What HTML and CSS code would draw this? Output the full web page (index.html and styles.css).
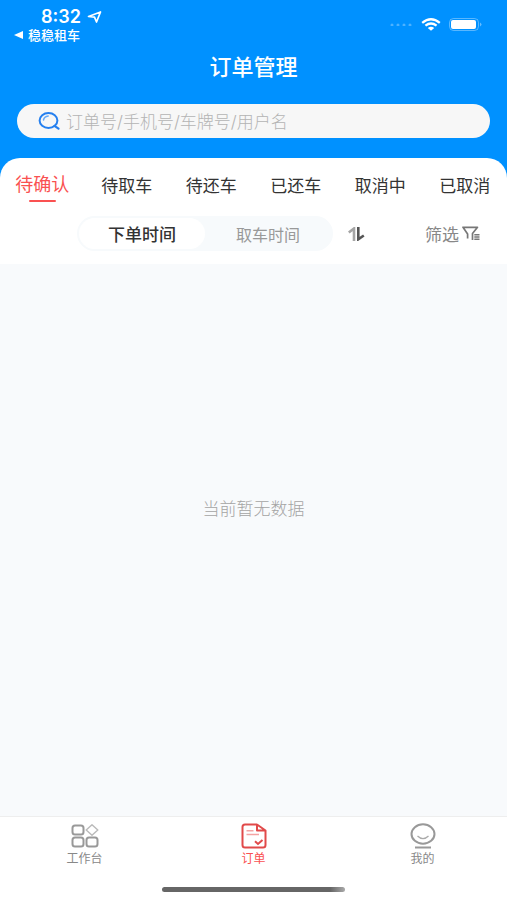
FILE: index.html
```html
<!DOCTYPE html>
<html lang="zh-CN">
<head>
    <meta charset="UTF-8">
    <meta name="viewport" content="width=device-width, initial-scale=1.0">
    <title>订单管理</title>
    <link rel="stylesheet" href="styles.css">
</head>
<body>
    <header class="header">
        <div class="status-bar">
            <div class="status-left">
                <div class="clock">
                    <span>8:32</span>
                    <svg width="15" height="12" viewBox="0 0 15 12"><path d="M1.5 5.5 L13.5 1 L9.5 11 L7.5 6.2 Z" fill="none" stroke="#fff" stroke-width="1.7" stroke-linejoin="round"/></svg>
                </div>
                <a class="back-link" href="#">
                    <svg width="9" height="8" viewBox="0 0 9 8"><path d="M0 4 L9 0 V8 Z" fill="#fff"/></svg>
                    <span>稳稳租车</span>
                </a>
            </div>
            <div class="status-right">
                <svg width="23" height="4" viewBox="0 0 23 4" fill="#fff" fill-opacity="0.3"><circle cx="2" cy="3" r="1.5"/><circle cx="8" cy="3" r="1.5"/><circle cx="14" cy="3" r="1.5"/><circle cx="20" cy="3" r="1.5"/></svg>
                <svg width="20" height="13" viewBox="0 0 20 13"><path d="M1.2 4.8 Q10 -2.2 18.8 4.8 M4.4 7.7 Q10 3.4 15.6 7.7" fill="none" stroke="#fff" stroke-width="2.3"/><path d="M6.8 9.9 Q10 7.5 13.2 9.9 L10 12.8 Z" fill="#fff"/></svg>
                <svg width="33" height="13" viewBox="0 0 33 13"><rect x="0.5" y="0.5" width="29" height="12" rx="4" fill="none" stroke="#fff" stroke-opacity="0.35"/><rect x="2" y="2" width="25" height="9" rx="2" fill="#fff"/><path d="M31 4.5 Q34 6.5 31 8.5 Z" fill="#fff" fill-opacity="0.4"/></svg>
            </div>
        </div>

        <h1 class="title">订单管理</h1>

        <label class="search">
            <svg width="22" height="18" viewBox="0 0 22 18" fill="none" stroke="#2680ef" stroke-linecap="round"><ellipse cx="10.5" cy="8.5" rx="8.9" ry="7.4" stroke-width="2"/><path d="M16.5 13.8 L20.5 16.7" stroke-width="2.2"/><path d="M5.5 8 Q6.2 4.5 10.2 4" stroke="#69aaf5" stroke-width="1.5"/></svg>
            <input type="text" placeholder="订单号/手机号/车牌号/用户名" aria-label="搜索订单">
        </label>
    </header>

    <section class="panel">
        <nav class="tabs">
            <button class="tab active">待确认</button>
            <button class="tab">待取车</button>
            <button class="tab">待还车</button>
            <button class="tab">已还车</button>
            <button class="tab">取消中</button>
            <button class="tab">已取消</button>
        </nav>

        <div class="toolbar">
            <div class="segment">
                <button class="segment-item selected">下单时间</button>
                <button class="segment-item">取车时间</button>
            </div>
            <button class="sort" aria-label="排序">
                <svg width="17" height="14" viewBox="0 0 17 14" fill="none" stroke-width="2.6"><path d="M6 14 V1.5 L0.8 5.5" stroke="#a5a5a5"/><path d="M10.3 0 V12.3 L15.8 8.5" stroke="#555"/></svg>
            </button>
            <button class="filter">
                <span>筛选</span>
                <svg width="18" height="15" viewBox="0 0 18 15" fill="none"><path d="M5.6 12.5 V8 L1 1.3 H15.5 L10.5 7.5 V14" stroke="#777" stroke-width="1.7" stroke-linejoin="round"/><path d="M12.3 8.7 H17.5 M12.3 11 H17.5 M12.3 13.3 H17.5" stroke="#777" stroke-width="1.4"/></svg>
            </button>
        </div>
    </section>

    <main class="content">
        <p class="empty">当前暂无数据</p>
    </main>

    <footer class="footer">
        <nav class="bottom-nav">
            <a class="nav-item" href="#">
                <svg width="28" height="26" viewBox="0 0 28 26" fill="none" stroke="#999" stroke-width="2"><rect x="1.5" y="2.5" width="11" height="9" rx="2.5"/><path d="M21 1.8 L26.8 7 L21 12.2 L15.2 7 Z" stroke="#bbb" stroke-width="1.5" stroke-linejoin="round"/><rect x="1.5" y="14.5" width="11" height="9" rx="2.5"/><rect x="15.5" y="14.5" width="11" height="9" rx="2.5"/></svg>
                <span>工作台</span>
            </a>
            <a class="nav-item current" href="#">
                <svg width="28" height="26" viewBox="0 0 28 26" fill="none" stroke="#e14a4a"><path d="M17 1.5 H5 Q2.5 1.5 2.5 4 V22 Q2.5 24.5 5 24.5 H23 Q25.5 24.5 25.5 22 V7.5 L17 1.5 V7.5 H25.5" stroke-width="2" stroke-linejoin="round"/><path d="M6.5 7.7 H13.5 M6.5 11.5 H19" stroke="#f4a3a3" stroke-width="1.5"/><path d="M15 18.3 L18 21 L22.5 17" stroke-width="2"/></svg>
                <span>订单</span>
            </a>
            <a class="nav-item" href="#">
                <svg width="28" height="26" viewBox="0 0 28 26" fill="none" stroke="#999"><ellipse cx="14" cy="11" rx="11.5" ry="9.7" stroke-width="2"/><path d="M8.5 13 Q14 18.3 19.5 13" stroke="#aaa" stroke-width="1.3"/><path d="M6 24.5 H22" stroke-width="2"/></svg>
                <span>我的</span>
            </a>
        </nav>
        <div class="home-indicator"></div>
    </footer>
</body>
</html>
```
FILE: styles.css
```css
* {
    box-sizing: border-box;
    margin: 0;
    padding: 0;
    font-family: 'Inter', 'Noto Sans CJK SC', sans-serif;
}
body {
    background: #0091ff;
    color: #333;
    min-height: 100vh;
    display: flex;
    flex-direction: column;
}
button {
    background: none;
    border: none;
    cursor: pointer;
}
a {
    text-decoration: none;
}
svg {
    display: block;
    flex-shrink: 0;
}

/* header */
.header {
    color: #fff;
    padding: 9px 17px 20px;
}
.status-bar {
    display: flex;
    justify-content: space-between;
}
.clock {
    display: flex;
    align-items: center;
    gap: 6px;
    margin-left: 24px;
    font-size: 18px;
    font-weight: 600;
    line-height: 16px;
}
.back-link {
    display: flex;
    align-items: center;
    gap: 5px;
    margin-top: 1px;
    margin-left: -3px;
    color: #fff;
    font-size: 13px;
    font-weight: 500;
    line-height: 18px;
}
.status-right {
    display: flex;
    align-items: center;
    gap: 8px;
    height: 30px;
    margin-right: 8px;
}
.title {
    margin: 10px 0 24px;
    font-size: 22px;
    font-weight: 500;
    line-height: 26px;
    text-align: center;
}
.search {
    display: flex;
    align-items: center;
    gap: 6px;
    height: 34px;
    padding: 0 21px;
    border-radius: 17px;
    background: #f7f7f7;
}
.search input {
    flex: 1;
    min-width: 0;
    padding-top: 2px;
    border: none;
    outline: none;
    background: transparent;
    color: #333;
    font-size: 17px;
    line-height: 24px;
}
.search input::placeholder {
    color: #b4b4b4;
    font-weight: 300;
}

/* order tabs and sorting */
.panel {
    background: #fff;
    border-radius: 20px 20px 0 0;
}
.tabs {
    display: grid;
    grid-template-columns: repeat(6, 1fr);
    padding-top: 12px;
}
.tab {
    display: flex;
    flex-direction: column;
    align-items: center;
    height: 32px;
    color: #333;
    font-size: 17px;
    line-height: 32px;
    white-space: nowrap;
}
.tab.active {
    color: #fa5151;
    font-size: 18px;
    line-height: 30px;
}
.tab.active::after {
    content: '';
    width: 27px;
    height: 2px;
    flex-shrink: 0;
    border-radius: 1px;
    background: #fa5151;
}
.toolbar {
    display: flex;
    align-items: center;
    padding: 14px 27px 13px 77px;
}
.segment {
    display: flex;
    flex: 0 1 256px;
    height: 35px;
    padding: 2px;
    border-radius: 18px;
    background: #f7fafc;
}
.segment-item {
    flex: 1;
    border-radius: 16px;
    color: #999;
    font-size: 16px;
}
.segment-item.selected {
    background: #fff;
    color: #333;
    font-size: 17px;
    font-weight: 500;
}
.sort {
    margin-left: 15px;
}
.filter {
    display: flex;
    align-items: center;
    gap: 3px;
    margin-left: auto;
    color: #888;
    font-size: 17px;
}

/* list */
.content {
    flex: 1;
    display: flex;
    justify-content: center;
    align-items: center;
    padding-bottom: 62px;
    background: #f8fafc;
}
.empty {
    color: #a4a4a4;
    font-size: 17px;
    font-weight: 300;
    line-height: 24px;
}

/* bottom navigation */
.footer {
    padding: 6px 0 8px;
    border-top: 1px solid #eee;
    background: #fff;
}
.bottom-nav {
    display: grid;
    grid-template-columns: repeat(3, 1fr);
}
.nav-item {
    display: flex;
    flex-direction: column;
    align-items: center;
    gap: 2px;
    color: #888;
    font-size: 12px;
    line-height: 16px;
}
.nav-item.current {
    color: #fa5151;
}
.home-indicator {
    width: 36%;
    height: 5px;
    margin: 20px auto 0;
    border-radius: 3px;
    background: linear-gradient(to right, #666 92%, #aaa);
}
```
